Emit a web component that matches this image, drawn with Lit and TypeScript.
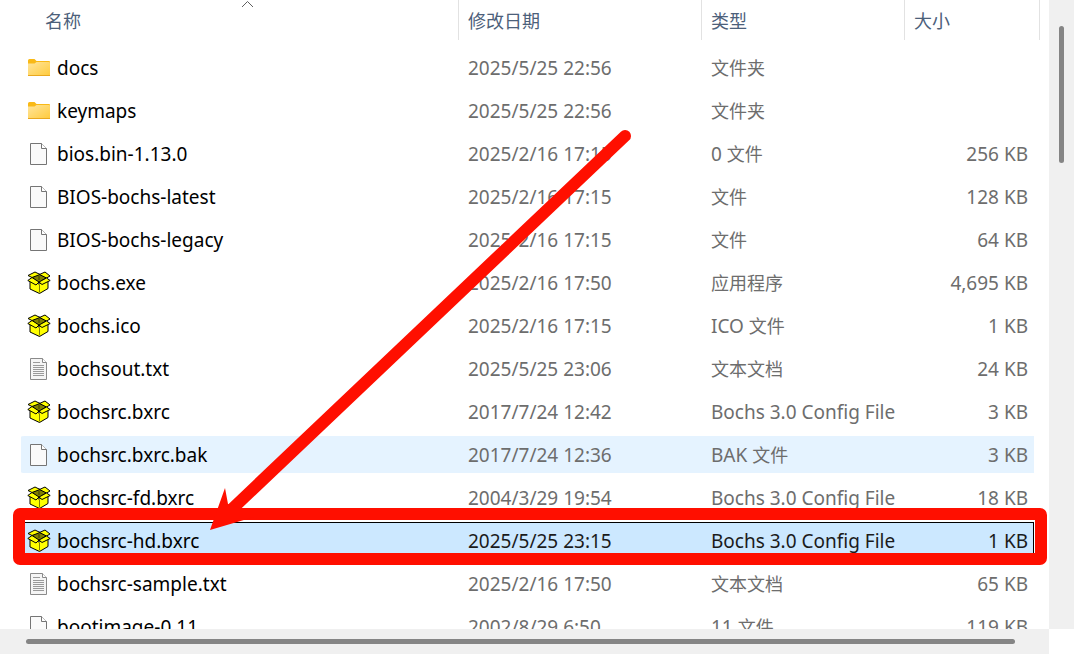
import { LitElement, html, css, svg } from "lit";
import { customElement, property } from "lit/decorators.js";

type Kind = "folder" | "file" | "text" | "box";
interface Entry {
  kind: Kind;
  name: string;
  date: string;
  type: string;
  size: string;
  state?: "hover" | "selected";
}

const entries: Entry[] = [
  { kind: "folder", name: "docs", date: "2025/5/25 22:56", type: "文件夹", size: "" },
  { kind: "folder", name: "keymaps", date: "2025/5/25 22:56", type: "文件夹", size: "" },
  { kind: "file", name: "bios.bin-1.13.0", date: "2025/2/16 17:15", type: "0 文件", size: "256 KB" },
  { kind: "file", name: "BIOS-bochs-latest", date: "2025/2/16 17:15", type: "文件", size: "128 KB" },
  { kind: "file", name: "BIOS-bochs-legacy", date: "2025/2/16 17:15", type: "文件", size: "64 KB" },
  { kind: "box", name: "bochs.exe", date: "2025/2/16 17:50", type: "应用程序", size: "4,695 KB" },
  { kind: "box", name: "bochs.ico", date: "2025/2/16 17:15", type: "ICO 文件", size: "1 KB" },
  { kind: "text", name: "bochsout.txt", date: "2025/5/25 23:06", type: "文本文档", size: "24 KB" },
  { kind: "box", name: "bochsrc.bxrc", date: "2017/7/24 12:42", type: "Bochs 3.0 Config File", size: "3 KB" },
  { kind: "file", name: "bochsrc.bxrc.bak", date: "2017/7/24 12:36", type: "BAK 文件", size: "3 KB", state: "hover" },
  { kind: "box", name: "bochsrc-fd.bxrc", date: "2004/3/29 19:54", type: "Bochs 3.0 Config File", size: "18 KB" },
  { kind: "box", name: "bochsrc-hd.bxrc", date: "2025/5/25 23:15", type: "Bochs 3.0 Config File", size: "1 KB", state: "selected" },
  { kind: "text", name: "bochsrc-sample.txt", date: "2025/2/16 17:50", type: "文本文档", size: "65 KB" },
  { kind: "file", name: "bootimage-0.11", date: "2002/8/29 6:50", type: "11 文件", size: "119 KB" },
];

const glyphs = {
  folder: svg`
    <defs><linearGradient id="f" x1="0" y1="0" x2="1" y2="1">
      <stop offset="0" stop-color="#ffe59c"/><stop offset="1" stop-color="#ffcb3d"/>
    </linearGradient></defs>
    <path d="M1 4.500Q1 3 2.500 3H7.500L9.500 5H22Q23 5 23 6V9H1Z" fill="#f9b916"/>
    <path d="M1 7.500H7.500L9.500 6H22Q23 6 23 7V19.500H1Z" fill="url(#f)"/>
    <path d="M1 19.500H23" stroke="#e9a81f"/>`,
  file: svg`
    <path d="M3.500 1.500H14.500L19.500 6.500V22.500H3.500Z" fill="#fafafa" stroke="#757575"/>
    <path d="M14.500 1.500V6.500H19.500" fill="#fff" stroke="#757575"/>`,
  text: svg`
    <path d="M3.500 1.500H15.500L19.500 5.500V22.500H3.500Z" fill="#f5f5f5" stroke="#8a8a8a"/>
    <path d="M15.500 1.500V5.500H19.500" fill="#fff" stroke="#8a8a8a"/>
    <path d="M6 5.500H13M6 8.500H17M6 10.500H17M6 12.500H17M6 14.500H17M6 16.500H17M6 18.500H17" stroke="#9a9a9a"/>`,
  box: svg`
    <g stroke="#000" stroke-linejoin="round">
      <path d="M3 10L12 13L21 10V17.500L12.500 22.500L3 18Z" fill="#ff0"/>
      <path d="M5 6.500L12 3L19.500 6.500L12 11.500Z" fill="#808000"/>
      <path d="M5 6.500L1 4.500L8 1L13 3.500Z" fill="#ff0"/>
      <path d="M12.500 3.500L18 1L23 5L19.500 7Z" fill="#ff0"/>
      <path d="M5 6.500L0.800 9.500L9 14L12 11Z" fill="#ff0"/>
      <path d="M19.500 7L23.200 9.500L15 13.500L12 11Z" fill="#ff0"/>
    </g>
    <path d="M12.500 14V21.500" stroke="#808000"/>
    <path d="M12 5V9" stroke="#3a3a00"/>`,
};

@customElement("file-icon")
class FileIcon extends LitElement {
  @property() kind: Kind = "file";

  static styles = css`
    :host { display: block; flex: none; width: 24px; height: 24px; }
    svg { display: block; }
  `;

  render() {
    return html`<svg width="24" height="24" viewBox="0 0 24 24" aria-hidden="true">${glyphs[this.kind]}</svg>`;
  }
}

@customElement("app-root")
class AppRoot extends LitElement {
  static styles = css`
    :host {
      display: grid;
      grid-template: minmax(0, 1fr) 25px / minmax(0, 1fr) 25px;
      position: relative;
      height: 100vh;
      overflow: hidden;
      background: #fff;
      color: #6d6d6d;
      font: 19px/36px "Noto Sans", "Noto Sans CJK SC", sans-serif;
    }
    * { box-sizing: border-box; }
    .list { overflow: hidden; padding: 0 9px 0 21px; }
    table { width: 100%; table-layout: fixed; border-collapse: separate; border-spacing: 0; }
    .c-date { width: 243px; }
    .c-type { width: 203px; }
    .c-size { width: 135px; }
    th { padding: 0 0 6px; }
    .head {
      position: relative;
      display: block;
      width: 100%;
      height: 40px;
      padding: 0 9px;
      border: 0;
      border-right: 1px solid #e2e2e2;
      background: none;
      color: #4c607a;
      font: 18px/40px "Noto Sans CJK SC", sans-serif;
      text-align: left;
    }
    .first { padding-left: 24px; }
    .sort { position: absolute; top: 0; left: 50%; }
    td {
      height: 43px;
      padding: 1px 9px 0;
      border: 0 solid transparent;
      border-width: 3px 0;
      background-clip: padding-box;
      white-space: nowrap;
    }
    .name { padding: 1px 0 0 6px; color: #000; }
    .label { display: flex; align-items: center; gap: 6px; }
    .size { padding: 1px 6px 0 0; border-right-width: 6px; text-align: right; }
    .han { font-size: 18px; }
    .hover td { background-color: #e5f3ff; }
    .hover .name { border-radius: 4px 0 0 4px; }
    .selected td { background-color: #cce8ff; color: #1b1b1b; box-shadow: inset 0 1px #000; }
    .selected .name { color: #000; }
    .selected .size { box-shadow: inset -1px 1px #000; }
    .bar { background: #f0f0f0; }
    .thumb { border-radius: 3px; background: #858585; }
    .vertical { padding: 26px 10px 0; }
    .vertical .thumb { height: 137px; }
    .horizontal { padding: 10px 34px 0 26px; }
    .horizontal .thumb { height: 5px; }
    .marks { position: absolute; top: 0; left: 0; pointer-events: none; }
  `;

  private mixed(text: string) {
    return text
      .split(/([\u4e00-\u9fff]+)/)
      .filter(Boolean)
      .map((part) => (/[\u4e00-\u9fff]/.test(part) ? html`<span class="han">${part}</span>` : part));
  }

  render() {
    return html`
      <main class="list">
        <table>
          <colgroup><col /><col class="c-date" /><col class="c-type" /><col class="c-size" /></colgroup>
          <thead>
            <tr>
              <th aria-sort="ascending">
                <button class="head first">名称<svg class="sort" width="14" height="10" viewBox="0 0 14 10" fill="none" stroke="#5f5f5f" aria-hidden="true"><path d="M2 7L7.500 1.500L13 7" /></svg></button>
              </th>
              <th><button class="head">修改日期</button></th>
              <th><button class="head">类型</button></th>
              <th><button class="head">大小</button></th>
            </tr>
          </thead>
          <tbody>
            ${entries.map(
              (e) => html`<tr class=${e.state ?? "plain"}>
                <td class="name"><div class="label"><file-icon kind=${e.kind}></file-icon>${e.name}</div></td>
                <td>${e.date}</td>
                <td>${this.mixed(e.type)}</td>
                <td class="size">${e.size}</td>
              </tr>`
            )}
          </tbody>
        </table>
      </main>
      <div class="bar vertical"><div class="thumb"></div></div>
      <div class="bar horizontal"><div class="thumb"></div></div>
      <svg class="marks" width="1074" height="654" viewBox="0 0 1074 654" aria-hidden="true">
        <rect x="19" y="514" width="1022" height="45" rx="1" fill="none" stroke="#ff0f00" stroke-width="12" stroke-linejoin="round" />
        <path d="M625 136L232 509" stroke="#ff0f00" stroke-width="12" stroke-linecap="round" />
        <path d="M210 530L225 488L228 504L242 509L254 517Z" fill="#ff0f00" />
      </svg>
    `;
  }
}
